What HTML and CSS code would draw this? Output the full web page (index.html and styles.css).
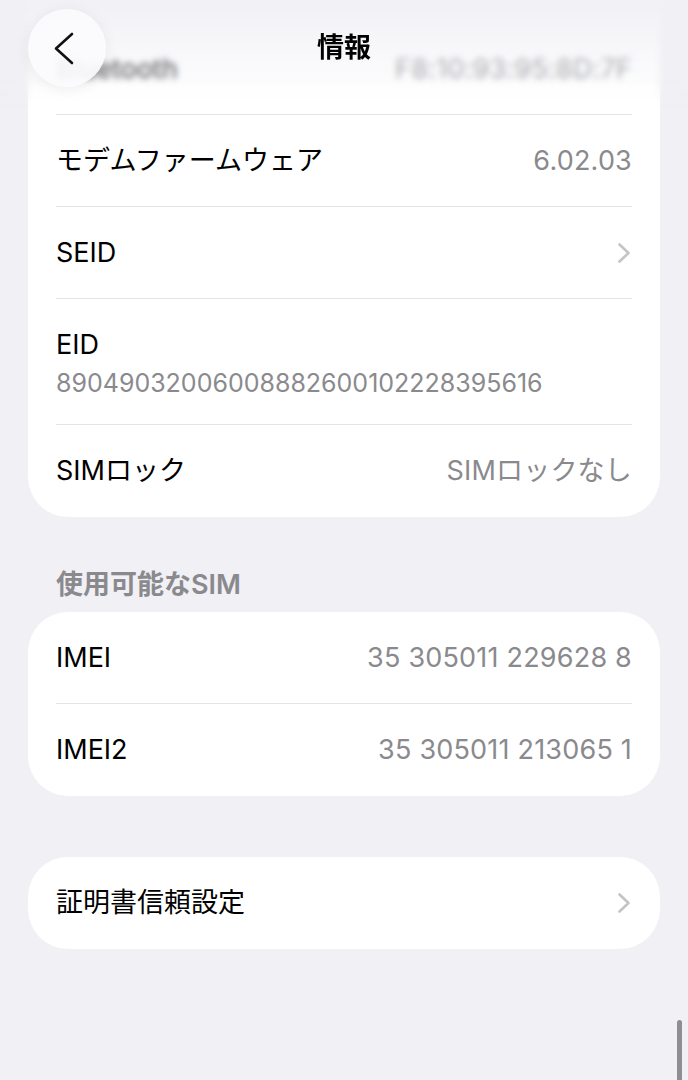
FILE: index.html
```html
<!DOCTYPE html>
<html lang="ja">

<head>
    <meta charset="utf-8">
    <title>情報</title>
    <meta name="viewport" content="width=device-width, initial-scale=1">
    <link rel="stylesheet" href="styles.css">
</head>

<body id="main-body">
    <div class="screen">
        <!-- floating nav bar over the scrolled list -->
        <header class="nav">
            <button class="back-button" aria-label="戻る">
                <svg width="78" height="78" viewBox="0 0 78 78">
                    <polyline points="44,25 28,39.5 44,54" fill="none" stroke="#111" stroke-width="2.6"
                        stroke-linecap="round" stroke-linejoin="round" />
                </svg>
            </button>
            <h1 class="nav-title">情報</h1>
            <div class="nav-spacer"></div>
        </header>

        <main class="list">
            <section class="group group-scrolled">
                <div class="row">
                    <span class="label">Bluetooth</span>
                    <span class="value">F8:10:93:95:8D:7F</span>
                </div>
                <div class="row">
                    <span class="label">モデムファームウェア</span>
                    <span class="value">6.02.03</span>
                </div>
                <div class="row">
                    <span class="label">SEID</span>
                    <svg class="chevron" width="14" height="22" viewBox="0 0 14 22">
                        <polyline points="2.5,2.5 11.5,11 2.5,19.5" fill="none" stroke="#c4c4c7" stroke-width="2.6"
                            stroke-linecap="round" stroke-linejoin="round" />
                    </svg>
                </div>
                <div class="row row-stacked">
                    <span class="label">EID</span>
                    <span class="sub-value">89049032006008882600102228395616</span>
                </div>
                <div class="row">
                    <span class="label">SIMロック</span>
                    <span class="value">SIMロックなし</span>
                </div>
            </section>

            <h2 class="group-header">使用可能なSIM</h2>
            <section class="group">
                <div class="row">
                    <span class="label">IMEI</span>
                    <span class="value">35 305011 229628 8</span>
                </div>
                <div class="row">
                    <span class="label">IMEI2</span>
                    <span class="value">35 305011 213065 1</span>
                </div>
            </section>

            <section class="group group-spaced">
                <div class="row">
                    <span class="label">証明書信頼設定</span>
                    <svg class="chevron" width="14" height="22" viewBox="0 0 14 22">
                        <polyline points="2.5,2.5 11.5,11 2.5,19.5" fill="none" stroke="#c4c4c7" stroke-width="2.6"
                            stroke-linecap="round" stroke-linejoin="round" />
                    </svg>
                </div>
            </section>
        </main>

        <div class="scroll-indicator"></div>
    </div>
</body>

</html>
```

FILE: styles.css
```css
#main-body {
    margin: 0;
    background-color: #f0f0f5;
    font-family: Inter, "Noto Sans CJK JP", sans-serif;
    color: #000;
}

.screen {
    position: relative;
    height: 1080px;
    overflow: hidden;
}

/* nav bar */
.nav {
    position: absolute;
    top: 0;
    left: 0;
    right: 0;
    z-index: 2;
    display: grid;
    grid-template-columns: 78px 1fr 78px;
    align-items: center;
    padding: 9px 28px 0;
}

.nav::before {
    content: "";
    position: absolute;
    top: 0;
    left: 0;
    right: 0;
    height: 108px;
    z-index: -1;
    background: linear-gradient(to bottom, rgba(240, 240, 245, 0.95) 0%, rgba(240, 240, 245, 0.4) 55%, rgba(240, 240, 245, 0) 100%);
    backdrop-filter: blur(3px);
    -webkit-mask-image: linear-gradient(to bottom, black 75%, transparent 100%);
    mask-image: linear-gradient(to bottom, black 75%, transparent 100%);
}

.back-button {
    width: 78px;
    height: 78px;
    padding: 0;
    border: none;
    border-radius: 50%;
    background-color: rgba(251, 251, 253, 0.92);
    box-shadow: 0 2px 14px rgba(0, 0, 0, 0.07);
}

.back-button svg {
    display: block;
}

.nav-title {
    margin: 0;
    text-align: center;
    font-size: 27px;
    font-weight: 700;
    line-height: 34px;
}

/* list (scrolled: the first group starts under the nav bar) */
.list {
    margin-top: -69px;
    padding: 0 28px;
}

.group {
    background-color: #fff;
    border-radius: 40px;
    overflow: hidden;
}

.group-scrolled {
    padding-top: 92px;
    border-top-left-radius: 0;
    border-top-right-radius: 0;
}

.group-spaced {
    margin-top: 61px;
}

.group-header {
    margin: 51px 0 10px;
    padding-left: 28px;
    font-size: 27px;
    font-weight: 600;
    line-height: 34px;
    color: #8a8a8e;
}

.row {
    box-sizing: border-box;
    display: flex;
    align-items: center;
    justify-content: space-between;
    min-height: 92px;
    margin: 0 28px;
    border-bottom: 1px solid #e3e3e8;
    font-size: 27px;
    line-height: 34px;
}

.row:last-child {
    border-bottom: none;
}

.row-stacked {
    min-height: 126px;
    padding-top: 4px;
    flex-direction: column;
    align-items: flex-start;
    justify-content: center;
    gap: 5px;
}

.value {
    color: #8a8a8e;
    letter-spacing: 0.2px;
}

.sub-value {
    color: #8a8a8e;
    font-size: 25px;
    line-height: 32px;
}

.chevron {
    display: block;
    margin-right: 1px;
}

.scroll-indicator {
    position: absolute;
    top: 1020px;
    right: 6px;
    width: 5px;
    height: 70px;
    border-radius: 3px;
    background-color: #8e8e93;
}
```
